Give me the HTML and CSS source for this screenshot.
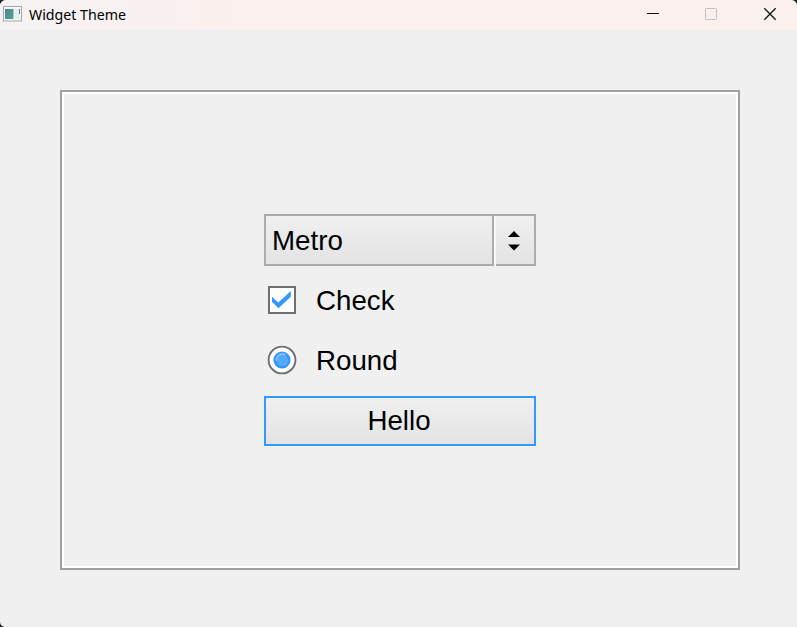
FILE: index.html
```html
<!DOCTYPE html>
<html lang="en">
<head>
<meta charset="utf-8">
<title>Widget Theme</title>
<link rel="stylesheet" href="styles.css">
</head>
<body>
<div class="window">
  <header class="titlebar">
    <svg class="app-icon" width="19" height="16" viewBox="0 0 19 16">
      <defs><linearGradient id="pane" x1="0" y1="0" x2="1" y2="1"><stop offset="0" stop-color="#4d7f9c"/><stop offset="1" stop-color="#55a985"/></linearGradient></defs>
      <rect x=".5" y=".5" width="18" height="14.5" fill="#f4f7f8" stroke="#a3a8ac"/>
      <rect x="2" y="3" width="8.5" height="10" fill="url(#pane)"/>
      <rect x="11.5" y="3" width="5.5" height="10" fill="#e3efec"/>
      <rect x="16" y="3" width="1" height="5" fill="#64798c"/>
    </svg>
    <h1 class="title">Widget Theme</h1>
    <svg class="controls" width="130" height="14" viewBox="0 0 130 14">
      <path d="M0 6.5h12" stroke="#111"/>
      <rect x="58.5" y="1.5" width="11" height="11" rx="1" fill="none" stroke="#c6bfbf"/>
      <path d="M117.3 1.3l11.4 11.4M128.7 1.3l-11.4 11.4" stroke="#111" stroke-width="1.3"/>
    </svg>
  </header>
  <main class="frame">
    <div class="form">
      <div class="combo">
        <div class="combo-value">Metro</div>
        <div class="combo-gap"></div>
        <div class="combo-arrow">
          <svg width="12" height="20" viewBox="0 0 12 20"><path d="M6 0l6 6H0zM0 13.6h12l-6 6z"/></svg>
        </div>
      </div>
      <label class="option">
        <svg width="28" height="28" viewBox="0 0 28 28">
          <rect x="1" y="1" width="26" height="26" fill="#fff" stroke="#707070" stroke-width="2"/>
          <path d="M4 10.7l6.3 5.8L22.8 5v5.7L10.5 22.3 4 16z" fill="#3399ff"/>
        </svg>
        <span class="option-text">Check</span>
      </label>
      <label class="option">
        <svg width="28" height="28" viewBox="0 0 28 28">
          <circle cx="14" cy="14" r="13.4" fill="#fff" stroke="#707070" stroke-width="1.9"/>
          <circle cx="14" cy="14" r="8.6" fill="#3399ff"/>
          <circle cx="14.3" cy="14.3" r="5.8" fill="#55aaff"/>
          <path d="M8.2 14.8a6.3 6.3 0 0 1 9.2-6" fill="none" stroke="#8cc6ff" stroke-width="1.5"/>
        </svg>
        <span class="option-text">Round</span>
      </label>
      <button class="push">Hello</button>
    </div>
  </main>
</div>
</body>
</html>
```
FILE: styles.css
```css
* { box-sizing: border-box; }
body { margin: 0; background: #222; }
.window {
  display: flex;
  flex-direction: column;
  height: 627px;
  background: #f0f0f0;
  border-radius: 6px 6px 0 5px;
  overflow: hidden;
}
.titlebar {
  display: flex;
  align-items: center;
  height: 30px;
  padding: 0 20px 2px 3px;
  background: linear-gradient(90deg, #f6f2f4, #faf0ee 30%);
}
.title {
  margin: 0 auto 0 7px;
  padding-top: 2px;
  font: 400 14.2px/20px "Noto Sans", sans-serif;
  color: #000;
}
.controls { overflow: visible; }
.frame {
  display: flex;
  justify-content: center;
  width: 680px;
  height: 480px;
  margin: 60px 0 0 60px;
  padding-top: 122px;
  border: 2px solid #a0a0a0;
  box-shadow: inset 0 0 0 2px #fff;
}
.form {
  width: 272px;
  font: 27.7px/32px "Liberation Sans", Arial, sans-serif;
  color: #000;
}
.combo { display: flex; height: 52px; }
.combo-value, .combo-arrow {
  border: 2px solid #acacac;
  background: linear-gradient(#f0f0f0, #e3e3e3);
}
.combo-value { width: 230px; padding: 9px 6px 0; }
.combo-gap {
  width: 2px;
  border-top: 2px solid #acacac;
  background: #f8f8f8;
}
.combo-arrow {
  display: flex;
  align-items: center;
  justify-content: center;
  width: 40px;
  padding: 1px 2px 0 0;
  border-left: 0;
}
.option {
  display: flex;
  align-items: center;
  gap: 20px;
  height: 60px;
  padding-left: 4px;
}
.option svg { overflow: visible; }
.option-text { padding-top: 1px; }
.combo + .option { margin-top: 4px; }
.push {
  display: block;
  width: 272px;
  height: 50px;
  margin-top: 6px;
  padding: 0 2px 0 0;
  border: 2px solid #3399ff;
  background: linear-gradient(#f0f0f0, #e3e3e3);
  font: inherit;
  color: inherit;
}
```
